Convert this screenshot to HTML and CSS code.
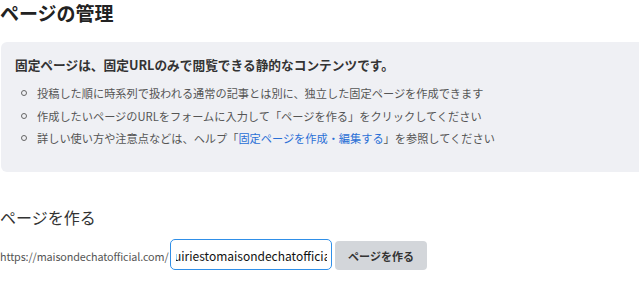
FILE: index.html
```html
<!DOCTYPE html>
<html lang="ja">
<head>
<meta charset="utf-8">
<link rel="stylesheet" href="styles.css">
</head>
<body>
<main class="page">
  <h1 class="title">ページの管理</h1>
  <section class="notice">
    <p class="notice-head">固定ページは、固定URLのみで閲覧できる静的なコンテンツです。</p>
    <ul class="notice-list">
      <li>投稿した順に時系列で扱われる通常の記事とは別に、独立した固定ページを作成できます</li>
      <li>作成したいページのURLをフォームに入力して「ページを作る」をクリックしてください</li>
      <li>詳しい使い方や注意点などは、ヘルプ「<a class="link" href="#">固定ページを作成・編集する</a>」を参照してください</li>
    </ul>
  </section>
  <h2 class="subtitle">ページを作る</h2>
  <form class="create-row">
    <span class="base-url">https://maisondechatofficial.com/</span>
    <div class="field"><div class="field-clip"><span class="field-text">uiriestomaisondechatofficial</span></div></div>
    <button class="btn" type="button">ページを作る</button>
  </form>
</main>
</body>
</html>
```
FILE: styles.css
```css
html, body {
  margin: 0;
  padding: 0;
  background: #ffffff;
}
body {
  font-family: "Noto Sans CJK JP", "Noto Sans", sans-serif;
  color: #333;
}
.page {
  width: 639px;
  padding: 0;
}
.title {
  margin: 0;
  font-size: 19px;
  line-height: 26px;
  font-weight: 700;
  color: #222;
}
.notice {
  margin: 16px 0 0 1px;
  width: 660px;
  height: 130px;
  box-sizing: border-box;
  background: #eff0f4;
  border-radius: 6px;
  padding: 13px 0 0 14px;
}
.notice-head {
  margin: 0;
  font-size: 12.7px;
  line-height: 20px;
  font-weight: 700;
  color: #333;
}
.notice-list {
  margin: 7px 0 0;
  padding: 0;
  list-style: none;
  font-size: 11.2px;
  line-height: 22.5px;
  color: #555;
}
.notice-list li {
  display: flex;
  align-items: center;
  white-space: nowrap;
}
.notice-list li::before {
  content: "";
  flex: none;
  width: 4px;
  height: 4px;
  border: 1px solid #666;
  border-radius: 50%;
  margin: 0 10px 0 6px;
}
.link {
  color: #2a6fd6;
  text-decoration: none;
}
.subtitle {
  margin: 35px 0 0;
  font-size: 16px;
  line-height: 20px;
  font-weight: 400;
  color: #333;
}
.create-row {
  display: flex;
  align-items: center;
  margin: 14px 0 0;
}
.base-url {
  flex: none;
  font-size: 10.8px;
  color: #555;
  letter-spacing: -0.12px;
  width: 170px;
  white-space: nowrap;
}
.field {
  flex: none;
  box-sizing: border-box;
  width: 162px;
  height: 31px;
  border: 1px solid #2f8fe8;
  border-radius: 5px;
  background: #fff;
  padding: 0 4px 0 5px;
  display: flex;
  align-items: center;
  margin-top: -3px;
}
.field-clip {
  overflow: hidden;
  white-space: nowrap;
  flex: 1;
}
.field-text {
  display: inline-block;
  font-size: 12px;
  color: #111;
  margin-left: -2px;
}
.btn {
  flex: none;
  margin-left: 3px;
  box-sizing: border-box;
  width: 92px;
  height: 29px;
  border: 0;
  border-radius: 4px;
  background: #d3d6da;
  font-family: inherit;
  font-size: 11px;
  font-weight: 700;
  color: #333;
  padding: 0;
}
```
